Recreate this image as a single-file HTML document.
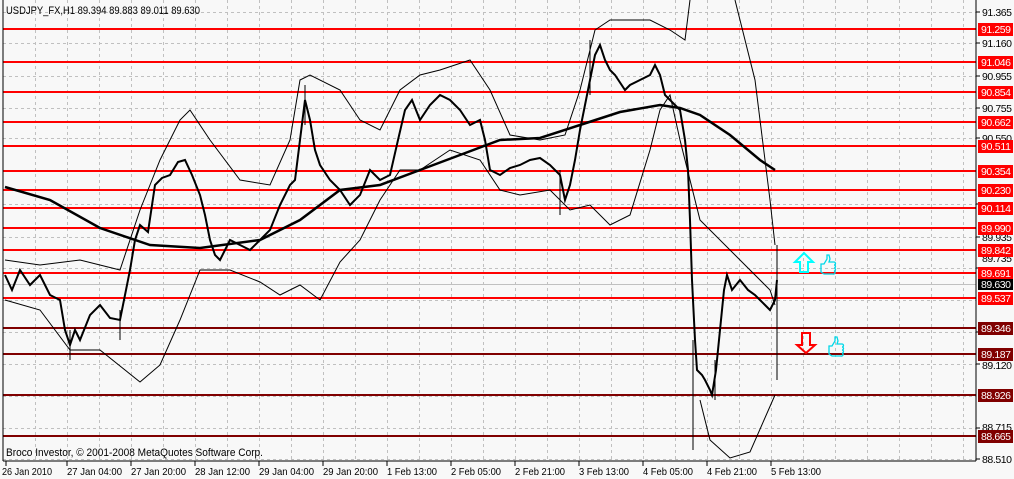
<!DOCTYPE html>
<html><head><style>
body{margin:0;background:#f8f8f8;width:1014px;height:479px;overflow:hidden}
svg{display:block;font-family:"Liberation Sans",sans-serif}
</style></head><body>
<svg width="1014" height="479" viewBox="0 0 1014 479">
<rect width="1014" height="479" fill="#f8f8f8"/>
<g stroke="#c0c0c0" stroke-dasharray="3,3" stroke-width="1">
<path d="M35.5 0V461M67.5 0V461M99.5 0V461M131.5 0V461M163.5 0V461M195.5 0V461M227.5 0V461M259.5 0V461M291.5 0V461M323.5 0V461M355.5 0V461M387.5 0V461M419.5 0V461M451.5 0V461M483.5 0V461M515.5 0V461M547.5 0V461M579.5 0V461M611.5 0V461M643.5 0V461M675.5 0V461M707.5 0V461M739.5 0V461M771.5 0V461M803.5 0V461M835.5 0V461M867.5 0V461M899.5 0V461M931.5 0V461M963.5 0V461"/>
<path d="M3 12.5H976M3 43.5H976M3 76.5H976M3 108.5H976M3 138.5H976M3 171.5H976M3 204.5H976M3 237.5H976M3 268.5H976M3 300.5H976M3 332.5H976M3 364.5H976M3 396.5H976M3 428.5H976M3 459.5H976"/>
</g>
<path d="M3 284.5H976" stroke="#c0c0c0"/>
<g stroke="#ff0000" stroke-width="2">
<path d="M3 29H976M3 62H976M3 92H976M3 122H976M3 146H976M3 171H976M3 190H976M3 208H976M3 228H976M3 250H976M3 273H976M3 298H976"/>
</g>
<g stroke="#800000" stroke-width="2">
<path d="M3 328H976M3 354H976M3 395H976M3 436H976"/>
</g>
<g fill="none" stroke="#000" stroke-width="1">
<polyline points="5,260 40,265 80,260 120,270 140,210 160,160 180,120 190,110 210,140 240,180 270,185 290,140 300,80 310,75 340,90 360,120 380,130 400,90 420,75 440,70 470,60 490,90 510,135 540,140 565,135 580,90 595,30 610,20 630,20 650,20 670,30 685,40 690,0"/>
<polyline points="5,300 40,310 70,350 100,350 140,382 160,365 180,320 200,270 230,270 260,282 280,295 300,285 320,300 340,262 360,240 380,200 400,170 420,170 450,150 480,160 500,190 520,195 550,190 570,210 590,205 610,225 630,215 650,150 660,110 670,95 680,140 700,220 740,260 770,290 775,305"/>
<polyline points="700,400 710,440 730,458 750,452 775,395"/>
<polyline points="735,0 755,80 770,200 775,245"/>
</g>
<polyline fill="none" stroke="#000" stroke-width="2.5" points="5,187 50,200 100,228 150,245 200,248 260,240 300,220 340,190 380,185 420,170 460,155 500,140 540,138 580,125 620,112 660,105 680,108 700,115 730,135 760,160 775,170"/>
<polyline fill="none" stroke="#000" stroke-width="2" points="5,275 12,290 20,270 30,285 40,275 50,295 60,300 65,330 70,345 75,330 80,340 90,315 100,305 110,318 120,320 125,295 130,270 135,240 140,225 148,232 155,185 162,178 170,175 178,162 185,160 192,175 200,195 205,215 210,240 215,255 220,260 230,240 240,245 250,250 260,240 270,230 280,205 290,185 295,180 300,140 305,100 310,120 315,150 320,165 330,180 340,190 350,205 360,195 370,170 380,180 390,175 398,140 405,110 412,100 420,120 430,105 440,95 450,100 460,110 470,125 480,120 485,140 490,170 500,175 510,168 520,165 530,160 540,158 550,165 560,175 565,200 570,185 575,160 580,130 585,105 590,80 595,55 600,45 605,60 610,70 615,75 625,90 630,85 640,80 650,75 655,65 660,75 665,95 670,100 675,105 680,110 685,140 688,170 690,220 692,280 695,340 697,370 702,375 705,380 710,390 712,395 716,370 720,330 724,290 727,275 732,290 740,280 748,290 755,295 760,300 765,305 770,310 775,300 777,280"/>
<path d="M777 245V380" stroke="#000"/>
<path d="M693 340V450M715 360V400M560 170V215M590 40V95M305 85V125M70 330V360M120 310V340" stroke="#000" stroke-width="1"/>
<path d="M3 0V461M3 461H976M976 0V461" stroke="#000" stroke-width="1"/>
<g stroke="#000"><path d="M6 461v5M67 461v5M131 461v5M195 461v5M259 461v5M323 461v5M387 461v5M451 461v5M515 461v5M579 461v5M643 461v5M707 461v5M771 461v5"/>
<path d="M976 12h4M976 43h4M976 76h4M976 108h4M976 138h4M976 204h4M976 237h4M976 268h4M976 332h4M976 364h4M976 428h4M976 459h4"/></g>
<path d="M800 272v-10h-5l9-9 9 9h-5v10z" fill="none" stroke="#00ffff" stroke-width="2"/>
<path d="M802 333v12h-5l9 8 9-8h-5v-12z" fill="none" stroke="#ff0000" stroke-width="2"/>
<g fill="none" stroke="#00d8e8" stroke-width="1.3">
<path d="M821 264h3l3-5v-4h2l1 4-1 3h5a1.5 1.5 0 0 1 0 3 1.5 1.5 0 0 1 0 3 1.5 1.5 0 0 1 0 3 1.5 1.5 0 0 1-1 3h-9l-3-2z"/>
<path d="M829 346h3l3-5v-4h2l1 4-1 3h5a1.5 1.5 0 0 1 0 3 1.5 1.5 0 0 1 0 3 1.5 1.5 0 0 1 0 3 1.5 1.5 0 0 1-1 3h-9l-3-2z"/>
</g>
<g font-size="11" fill="#000">
<text x="6" y="14" textLength="194" lengthAdjust="spacingAndGlyphs">USDJPY_FX,H1  89.394 89.883 89.011 89.630</text>
<text x="6" y="456" textLength="257" lengthAdjust="spacingAndGlyphs">Broco Investor, © 2001-2008 MetaQuotes Software Corp.</text>
<g font-size="10.5">
<text x="2" y="475" textLength="50" lengthAdjust="spacingAndGlyphs">26 Jan 2010</text><text x="67" y="475" textLength="55" lengthAdjust="spacingAndGlyphs">27 Jan 04:00</text><text x="131" y="475" textLength="55" lengthAdjust="spacingAndGlyphs">27 Jan 20:00</text><text x="195" y="475" textLength="55" lengthAdjust="spacingAndGlyphs">28 Jan 12:00</text><text x="259" y="475" textLength="55" lengthAdjust="spacingAndGlyphs">29 Jan 04:00</text><text x="323" y="475" textLength="55" lengthAdjust="spacingAndGlyphs">29 Jan 20:00</text><text x="387" y="475" textLength="50" lengthAdjust="spacingAndGlyphs">1 Feb 13:00</text><text x="451" y="475" textLength="50" lengthAdjust="spacingAndGlyphs">2 Feb 05:00</text><text x="515" y="475" textLength="50" lengthAdjust="spacingAndGlyphs">2 Feb 21:00</text><text x="579" y="475" textLength="50" lengthAdjust="spacingAndGlyphs">3 Feb 13:00</text><text x="643" y="475" textLength="50" lengthAdjust="spacingAndGlyphs">4 Feb 05:00</text><text x="707" y="475" textLength="50" lengthAdjust="spacingAndGlyphs">4 Feb 21:00</text><text x="771" y="475" textLength="50" lengthAdjust="spacingAndGlyphs">5 Feb 13:00</text>
</g>
<g font-size="10.5">
<text x="982" y="16" textLength="30">91.365</text><text x="982" y="47" textLength="30">91.160</text><text x="982" y="80" textLength="30">90.955</text><text x="982" y="112" textLength="30">90.755</text><text x="982" y="142" textLength="30">90.550</text><text x="982" y="241" textLength="30">89.935</text><text x="982" y="262" textLength="30">89.735</text><text x="982" y="369" textLength="30">89.120</text><text x="982" y="431" textLength="30">88.715</text><text x="982" y="463" textLength="30">88.510</text>
</g>
</g>
<g fill="#ff0000"><rect x="978" y="23" width="35" height="13"/><rect x="978" y="56" width="35" height="13"/><rect x="978" y="86" width="35" height="13"/><rect x="978" y="116" width="35" height="13"/><rect x="978" y="140" width="35" height="13"/><rect x="978" y="165" width="35" height="13"/><rect x="978" y="184" width="35" height="13"/><rect x="978" y="202" width="35" height="13"/><rect x="978" y="222" width="35" height="13"/><rect x="978" y="244" width="35" height="13"/><rect x="978" y="267" width="35" height="13"/><rect x="978" y="292" width="35" height="13"/></g>
<rect x="978" y="279" width="35" height="11" fill="#000"/>
<g fill="#800000"><rect x="978" y="322" width="35" height="13"/><rect x="978" y="348" width="35" height="13"/><rect x="978" y="389" width="35" height="13"/><rect x="978" y="430" width="35" height="13"/></g>
<g font-size="10.5" fill="#fff">
<text x="981" y="33" textLength="30">91.259</text><text x="981" y="66" textLength="30">91.046</text><text x="981" y="96" textLength="30">90.854</text><text x="981" y="126" textLength="30">90.662</text><text x="981" y="150" textLength="30">90.511</text><text x="981" y="175" textLength="30">90.354</text><text x="981" y="194" textLength="30">90.230</text><text x="981" y="212" textLength="30">90.114</text><text x="981" y="232" textLength="30">89.990</text><text x="981" y="254" textLength="30">89.842</text><text x="981" y="277" textLength="30">89.691</text><text x="981" y="288" textLength="30">89.630</text><text x="981" y="302" textLength="30">89.537</text><text x="981" y="332" textLength="30">89.346</text><text x="981" y="358" textLength="30">89.187</text><text x="981" y="399" textLength="30">88.926</text><text x="981" y="440" textLength="30">88.665</text>
</g>
</svg>
</body></html>
